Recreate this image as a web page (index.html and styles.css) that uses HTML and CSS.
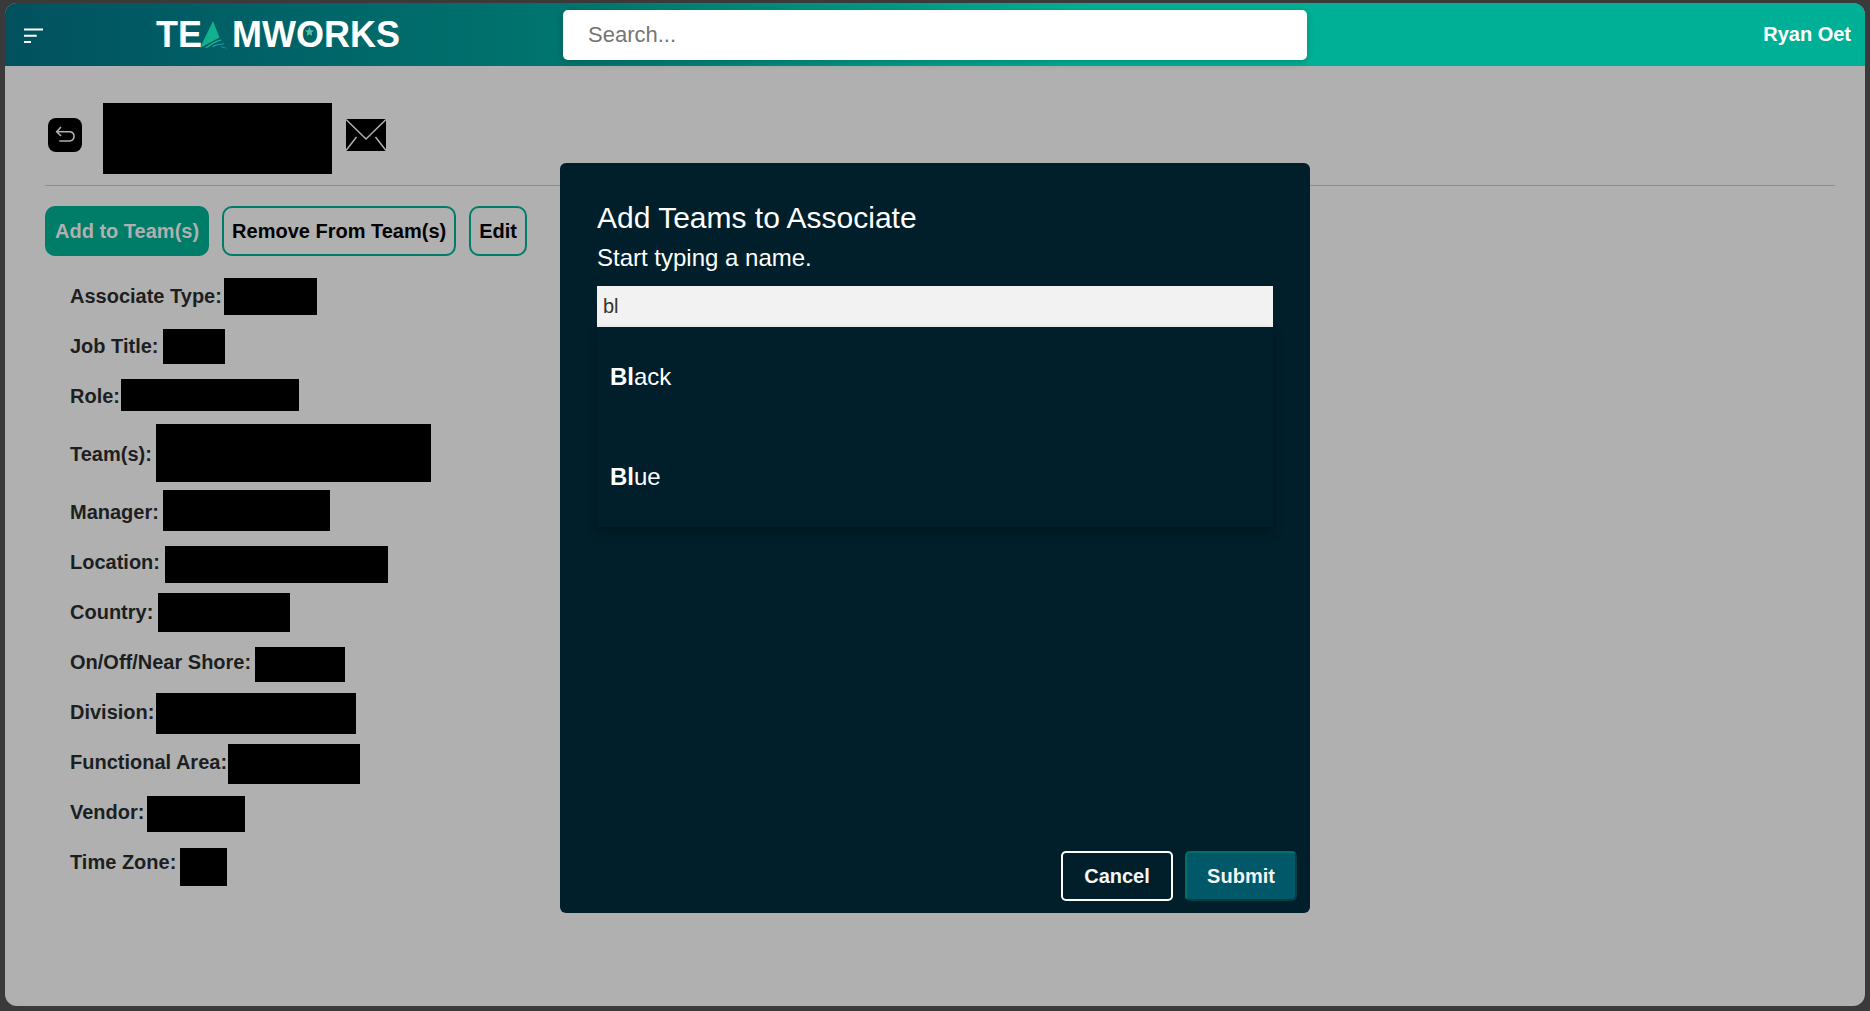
FILE: index.html
```html
<!DOCTYPE html>
<html lang="en">
<head>
    <meta charset="UTF-8">
    <title>Teamworks</title>
    <link rel="stylesheet" href="styles.css">
</head>
<body>
    <div class="window">
        <header class="topbar">
            <svg class="menu-icon" width="19" height="15" viewBox="0 0 19 15">
                <path d="M0 1.5H19M0 7.8H12.7M0 14H7" stroke="#fff" stroke-width="2" fill="none"/>
            </svg>
            <div class="logo">
                <span>TE</span>
                <svg class="logo-a" width="30" height="28" viewBox="0 0 30 28">
                    <path d="M14 0L20.5 16.5L1 27Z" fill="#13b08f"/>
                    <path d="M6 27Q14 20 22 18.5L22.5 19.5Q15 21.5 8 27Z" fill="#13b08f"/>
                    <path d="M13 25Q19 22 25 22.5L25 23.3Q19 23.5 14 26Z" fill="#1aa5a5"/>
                    <path d="M22 25.5Q25 25 29 28Q25 26.5 22 26.3Z" fill="#1b9fc0"/>
                </svg>
                <span>MW</span>
                <span class="logo-o">O<svg class="logo-star" width="9" height="9" viewBox="0 0 20 20"><path d="M10 0L13 7L20 7.6L14.6 12.3L16.2 20L10 16L3.8 20L5.4 12.3L0 7.6L7 7Z" fill="#4fc3a1"/></svg></span>
                <span>RKS</span>
            </div>
            <input class="search" type="text" placeholder="Search...">
            <div class="user">Ryan Oet</div>
        </header>

        <main class="page">
            <div class="title-row">
                <span class="back-btn">
                    <svg width="34" height="34" viewBox="0 0 34 34">
                        <path d="M13 9L8.7 13.7L13 18M8.7 13.7H22A4.7 4.7 0 0 1 22 23H11.3" stroke="#b0b0b0" stroke-width="1.6" fill="none"/>
                    </svg>
                </span>
                <div class="redact name-block"></div>
                <svg class="mail-icon" width="40" height="32" viewBox="0 0 40 32">
                    <rect width="40" height="32" fill="#000"/>
                    <path d="M0 .5L20 20L40 .5M0 31.5L10.5 18M40 31.5L29.5 18" stroke="#b0b0b0" stroke-width="1.5" fill="none"/>
                </svg>
            </div>

            <div class="actions">
                <button class="btn btn-fill">Add to Team(s)</button>
                <button class="btn">Remove From Team(s)</button>
                <button class="btn">Edit</button>
            </div>

            <div class="fields">
                <div class="field"><span class="label">Associate Type:</span><div class="redact r-type"></div></div>
                <div class="field"><span class="label">Job Title:</span><div class="redact r-job"></div></div>
                <div class="field"><span class="label">Role:</span><div class="redact r-role"></div></div>
                <div class="field field-team"><span class="label">Team(s):</span><div class="redact r-team"></div></div>
                <div class="field"><span class="label">Manager:</span><div class="redact r-manager"></div></div>
                <div class="field"><span class="label">Location:</span><div class="redact r-location"></div></div>
                <div class="field"><span class="label">Country:</span><div class="redact r-country"></div></div>
                <div class="field"><span class="label">On/Off/Near Shore:</span><div class="redact r-shore"></div></div>
                <div class="field"><span class="label">Division:</span><div class="redact r-division"></div></div>
                <div class="field"><span class="label">Functional Area:</span><div class="redact r-area"></div></div>
                <div class="field"><span class="label">Vendor:</span><div class="redact r-vendor"></div></div>
                <div class="field"><span class="label">Time Zone:</span><div class="redact r-zone"></div></div>
            </div>
        </main>

        <div class="modal">
            <h2 class="modal-title">Add Teams to Associate</h2>
            <p class="modal-sub">Start typing a name.</p>
            <input class="team-input" type="text" value="bl">
            <ul class="suggestions">
                <li><b>Bl</b>ack</li>
                <li><b>Bl</b>ue</li>
            </ul>
            <div class="modal-footer">
                <button class="modal-btn cancel">Cancel</button>
                <button class="modal-btn submit">Submit</button>
            </div>
        </div>
    </div>
</body>
</html>
```

FILE: styles.css
```css
*{
    padding: 0;
    margin: 0;
    box-sizing: border-box;
}
ul{
    list-style: none;
}
html, body{
    height: 100%;
    overflow: hidden;
}
body{
    background: #3a3a3a;
    padding: 3px 5px 5px 5px;
    font-family: "Liberation Sans", Arial, sans-serif;
}
.window{
    position: relative;
    height: 100%;
    background: #b0b0b0;
    border-radius: 12px;
    overflow: hidden;
    display: flex;
    flex-direction: column;
}

/* top bar */
.topbar{
    height: 63px;
    flex-shrink: 0;
    display: flex;
    align-items: center;
    padding: 0 14px 0 19px;
    background: linear-gradient(90deg, #01515f 0%, #00756f 30%, #00b096 58%, #00b096 100%);
}
.menu-icon{
    flex-shrink: 0;
    margin-top: 1px;
}
.logo{
    width: 217px;
    margin-left: 113px;
    display: flex;
    align-items: center;
    color: #fff;
    font-family: "Liberation Sans Narrow", "Liberation Sans", sans-serif;
    font-weight: bold;
    font-size: 36px;
    line-height: 40px;
}
.logo-a{
    margin: 0 3px 0 -3px;
    flex-shrink: 0;
}
.logo-o{
    position: relative;
}
.logo-star{
    position: absolute;
    left: 9px;
    top: 12px;
}
.search{
    width: 744px;
    height: 50px;
    margin-left: 190px;
    padding-left: 25px;
    border: none;
    border-radius: 5px;
    background: #fff;
    box-shadow: 0 2px 8px rgba(0,0,0,.2);
    font-family: "Liberation Sans", Arial, sans-serif;
    font-size: 22px;
    outline: none;
}
.search::placeholder{
    color: #757575;
}
.user{
    margin-left: auto;
    color: #fff;
    font-size: 20px;
    font-weight: bold;
}

/* associate page */
.page{
    flex: 1;
    padding: 0 30px 0 40px;
}
.redact{
    background: #000;
    flex-shrink: 0;
}
.title-row{
    display: flex;
    align-items: flex-start;
    height: 120px;
    padding-top: 37px;
    border-bottom: 1px solid #8e8e8e;
}
.back-btn{
    display: block;
    width: 34px;
    height: 34px;
    margin: 15px 0 0 3px;
    background: #000;
    border-radius: 8px;
}
.name-block{
    width: 229px;
    height: 71px;
    margin-left: 21px;
}
.mail-icon{
    margin: 16px 0 0 14px;
}
.actions{
    display: flex;
    gap: 13px;
    margin-top: 20px;
}
.btn{
    height: 50px;
    padding: 0 8px;
    border: 2px solid #007d68;
    border-radius: 10px;
    background: transparent;
    color: #000;
    font-family: "Liberation Sans", Arial, sans-serif;
    font-size: 20px;
    font-weight: bold;
}
.btn-fill{
    background: #007d68;
    color: #b0b0b0;
}
.fields{
    margin-top: 15px;
    padding-left: 25px;
}
.field{
    display: flex;
    align-items: center;
    height: 50px;
}
.field-team{
    height: 66px;
}
.label{
    color: #1c1f22;
    font-size: 20px;
    font-weight: bold;
    white-space: nowrap;
}
.r-type{ width: 93px; height: 37px; margin-left: 2px; }
.r-job{ width: 62px; height: 35px; margin-left: 4px; }
.r-role{ width: 178px; height: 32px; margin: 0 0 2px 1px; }
.r-team{ width: 275px; height: 58px; margin: 0 0 2px 4px; }
.r-manager{ width: 167px; height: 41px; margin: 0 0 4px 4px; }
.r-location{ width: 223px; height: 37px; margin: 4px 0 0 5px; }
.r-country{ width: 132px; height: 39px; margin-left: 5px; }
.r-shore{ width: 90px; height: 35px; margin: 4px 0 0 4px; }
.r-division{ width: 200px; height: 41px; margin: 2px 0 0 2px; }
.r-area{ width: 132px; height: 40px; margin: 3px 0 0 1px; }
.r-vendor{ width: 98px; height: 36px; margin: 3px 0 0 3px; }
.r-zone{ width: 47px; height: 38px; margin: 10px 0 0 4px; }

/* dialog */
.modal{
    position: absolute;
    left: 555px;
    top: 160px;
    width: 750px;
    height: 750px;
    padding: 37px 13px 12px 37px;
    display: flex;
    flex-direction: column;
    background: #001f2b;
    border-radius: 6px;
    color: #fff;
}
.modal-title{
    font-size: 30px;
    font-weight: normal;
    line-height: 36px;
}
.modal-sub{
    margin-top: 7px;
    font-size: 24px;
    line-height: 29px;
}
.team-input{
    width: 676px;
    height: 41px;
    margin-top: 14px;
    padding-left: 6px;
    border: none;
    background: #f2f2f2;
    color: #333;
    font-family: "Liberation Sans", Arial, sans-serif;
    font-size: 20px;
    outline: none;
}
.suggestions{
    width: 676px;
    box-shadow: 0 5px 10px rgba(0,0,0,.3);
}
.suggestions li{
    height: 100px;
    padding-left: 13px;
    font-size: 24px;
    line-height: 100px;
}
.modal-footer{
    margin-top: auto;
    display: flex;
    justify-content: flex-end;
    gap: 12px;
}
.modal-btn{
    width: 112px;
    height: 50px;
    border-radius: 5px;
    color: #f5f5f5;
    font-family: "Liberation Sans", Arial, sans-serif;
    font-size: 20px;
    font-weight: bold;
}
.cancel{
    border: 2px solid #fff;
    background: transparent;
}
.submit{
    border: 2px solid #006f66;
    border-right-color: #00403f;
    border-bottom-color: #00403f;
    background: #005868;
}
```
